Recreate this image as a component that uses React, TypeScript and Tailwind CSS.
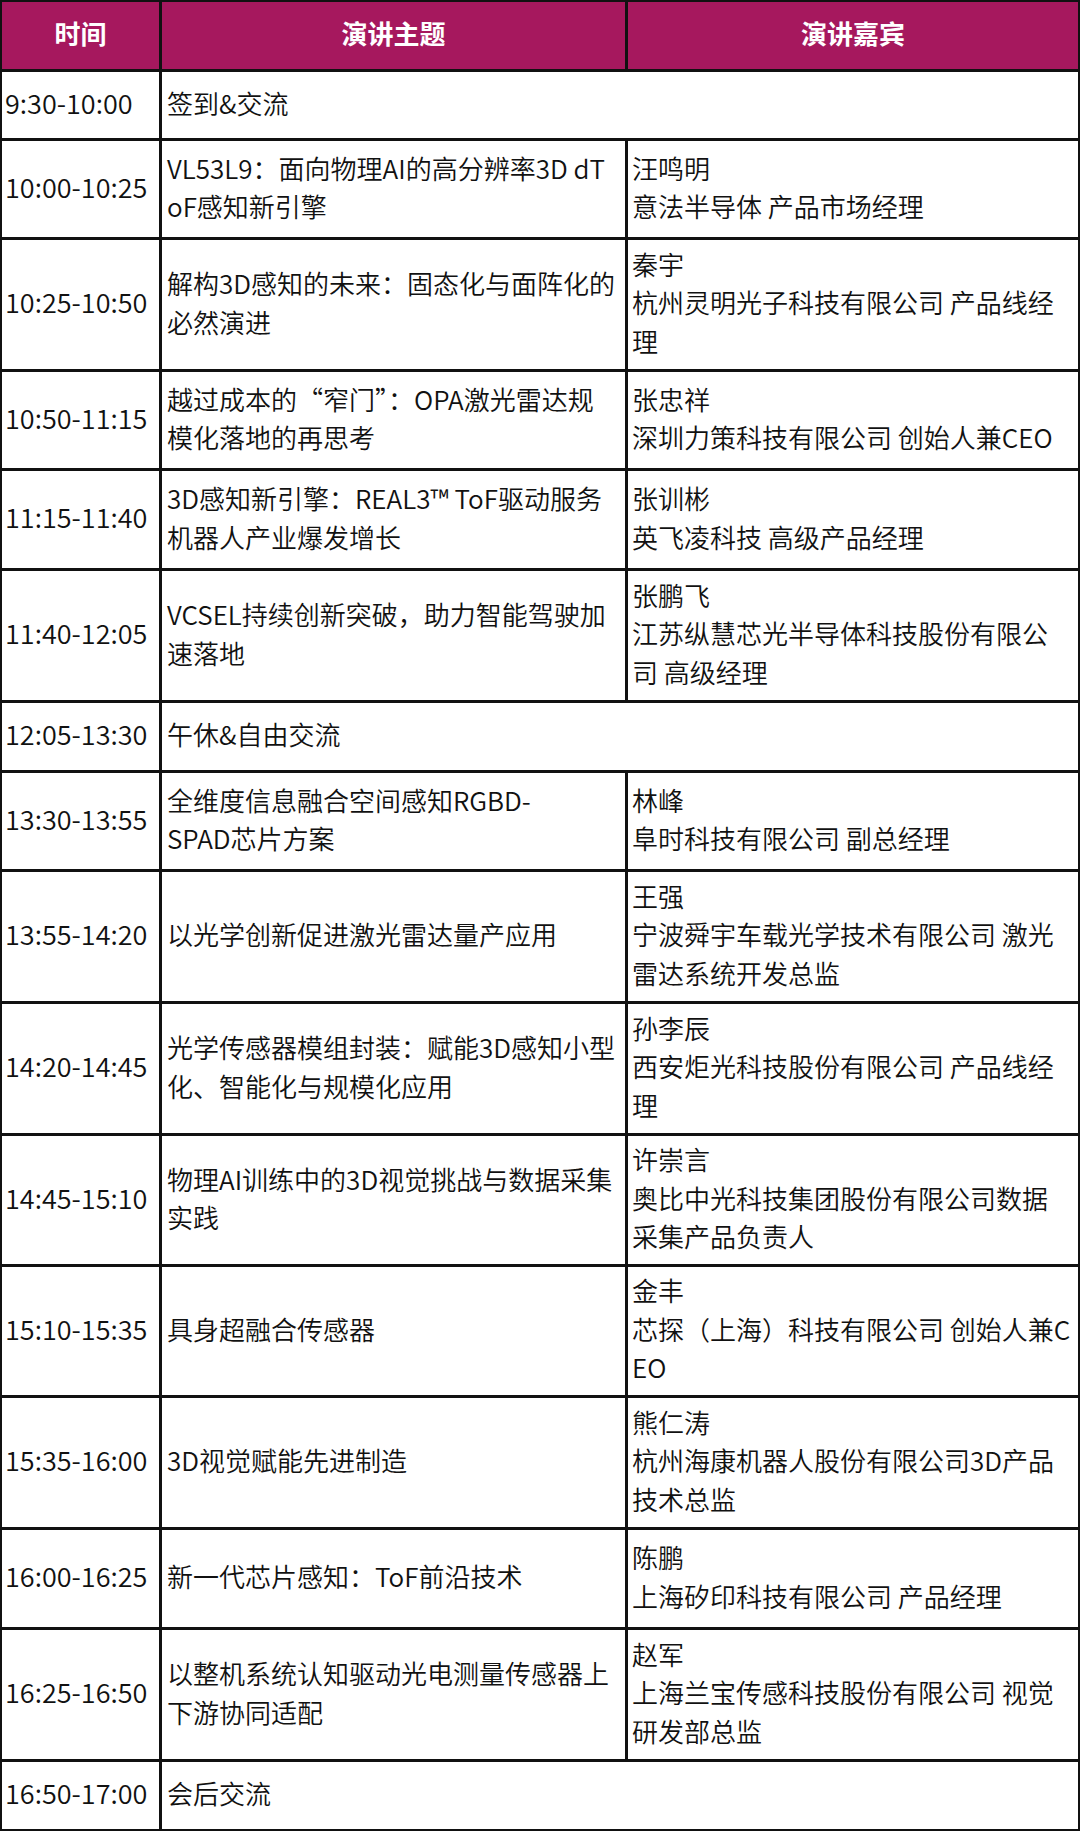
import React from "react";

type Row = {
  time: string;
  topic: string[];
  speaker?: string[];
  h: string;
};

const rows: Row[] = [
  { time: "9:30-10:00", topic: ["签到&交流"], h: "h-[66px]" },
  {
    time: "10:00-10:25",
    topic: ["VL53L9：面向物理AI的高分辨率3D dT", "oF感知新引擎"],
    speaker: ["汪鸣明", "意法半导体 产品市场经理"],
    h: "h-[96px]",
  },
  {
    time: "10:25-10:50",
    topic: ["解构3D感知的未来：固态化与面阵化的", "必然演进"],
    speaker: ["秦宇", "杭州灵明光子科技有限公司 产品线经", "理"],
    h: "h-[129px]",
  },
  {
    time: "10:50-11:15",
    topic: ["越过成本的“窄门”：OPA激光雷达规", "模化落地的再思考"],
    speaker: ["张忠祥", "深圳力策科技有限公司 创始人兼CEO"],
    h: "h-[96px]",
  },
  {
    time: "11:15-11:40",
    topic: ["3D感知新引擎：REAL3™ ToF驱动服务", "机器人产业爆发增长"],
    speaker: ["张训彬", "英飞凌科技 高级产品经理"],
    h: "h-[97px]",
  },
  {
    time: "11:40-12:05",
    topic: ["VCSEL持续创新突破，助力智能驾驶加", "速落地"],
    speaker: ["张鹏飞", "江苏纵慧芯光半导体科技股份有限公", "司 高级经理"],
    h: "h-[129px]",
  },
  { time: "12:05-13:30", topic: ["午休&自由交流"], h: "h-[67px]" },
  {
    time: "13:30-13:55",
    topic: ["全维度信息融合空间感知RGBD-", "SPAD芯片方案"],
    speaker: ["林峰", "阜时科技有限公司 副总经理"],
    h: "h-[96px]",
  },
  {
    time: "13:55-14:20",
    topic: ["以光学创新促进激光雷达量产应用"],
    speaker: ["王强", "宁波舜宇车载光学技术有限公司 激光", "雷达系统开发总监"],
    h: "h-[129px]",
  },
  {
    time: "14:20-14:45",
    topic: ["光学传感器模组封装：赋能3D感知小型", "化、智能化与规模化应用"],
    speaker: ["孙李辰", "西安炬光科技股份有限公司 产品线经", "理"],
    h: "h-[129px]",
  },
  {
    time: "14:45-15:10",
    topic: ["物理AI训练中的3D视觉挑战与数据采集", "实践"],
    speaker: ["许崇言", "奥比中光科技集团股份有限公司数据", "采集产品负责人"],
    h: "h-[128px]",
  },
  {
    time: "15:10-15:35",
    topic: ["具身超融合传感器"],
    speaker: ["金丰", "芯探（上海）科技有限公司 创始人兼C", "EO"],
    h: "h-[128px]",
  },
  {
    time: "15:35-16:00",
    topic: ["3D视觉赋能先进制造"],
    speaker: ["熊仁涛", "杭州海康机器人股份有限公司3D产品", "技术总监"],
    h: "h-[129px]",
  },
  {
    time: "16:00-16:25",
    topic: ["新一代芯片感知：ToF前沿技术"],
    speaker: ["陈鹏", "上海矽印科技有限公司 产品经理"],
    h: "h-[97px]",
  },
  {
    time: "16:25-16:50",
    topic: ["以整机系统认知驱动光电测量传感器上", "下游协同适配"],
    speaker: ["赵军", "上海兰宝传感科技股份有限公司 视觉", "研发部总监"],
    h: "h-[129px]",
  },
  { time: "16:50-17:00", topic: ["会后交流"], h: "h-[67px]" },
];

function Lines({ lines }: { lines: string[] }) {
  return (
    <div>
      {lines.map((l, i) => (
        <div key={i} className="whitespace-pre">
          {l}
        </div>
      ))}
    </div>
  );
}

export default function App() {
  return (
    <div
      className="w-[1080px] bg-white text-[26px] font-[350] leading-[38.5px] text-[#111111]"
      style={{ fontFamily: '"Noto Sans CJK SC", "Noto Sans", sans-serif' }}
    >
      <div className="grid grid-cols-[157px_463px_450px] gap-[3px] bg-[#111111] p-[2px]">
        {/* header */}
        <div className="flex h-[67px] items-center justify-center bg-[#a6185e] pb-[4px] font-bold text-white">
          时间
        </div>
        <div className="flex h-[67px] items-center justify-center bg-[#a6185e] pb-[4px] font-bold text-white">
          演讲主题
        </div>
        <div className="flex h-[67px] items-center justify-center bg-[#a6185e] pb-[4px] font-bold text-white">
          演讲嘉宾
        </div>

        {rows.map((r, i) => (
          <React.Fragment key={i}>
            <div className={`flex items-center bg-white pb-[4px] pl-[3px] text-[27px] ${r.h}`}>
              {r.time}
            </div>
            {r.speaker ? (
              <>
                <div className={`flex items-center bg-white pb-[4px] pl-[5px] ${r.h}`}>
                  <Lines lines={r.topic} />
                </div>
                <div className={`flex items-center bg-white pb-[4px] pl-[4px] ${r.h}`}>
                  <Lines lines={r.speaker} />
                </div>
              </>
            ) : (
              <div className={`col-span-2 flex items-center bg-white pb-[4px] pl-[5px] ${r.h}`}>
                <Lines lines={r.topic} />
              </div>
            )}
          </React.Fragment>
        ))}
      </div>
    </div>
  );
}
